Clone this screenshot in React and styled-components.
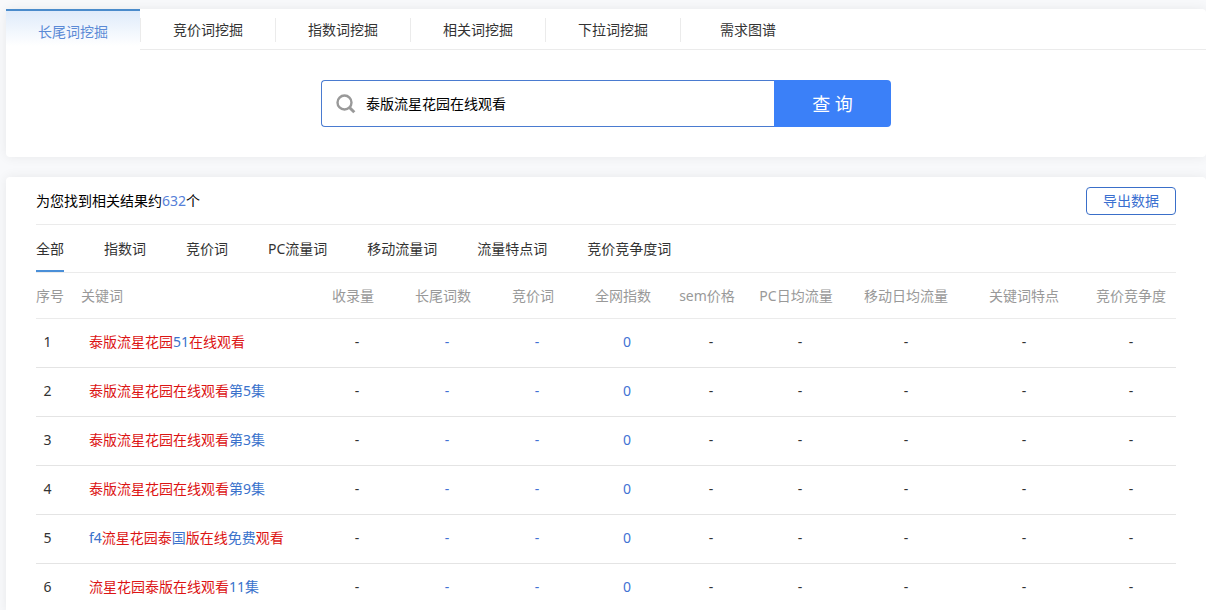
import React, { useState } from "react";
import styled, { createGlobalStyle } from "styled-components";

const GlobalStyle = createGlobalStyle`
  *, *::before, *::after { box-sizing: border-box; }
  body {
    margin: 0;
    background: #f8f9fb;
    color: #333;
    font: 14px/20px "Noto Sans", "Noto Sans CJK SC", sans-serif;
  }
  button, input { font: inherit; }
`;

const Page = styled.main`
  display: flex;
  flex-direction: column;
  gap: 20px;
  padding: 9px 0 20px 6px;
`;

const Card = styled.section`
  background: #fff;
  border-radius: 4px;
  box-shadow: 0 0 12px rgba(0, 0, 0, 0.07);
`;

const TabBar = styled.nav`
  display: flex;
  height: 41px;

  &::after {
    content: "";
    flex: 1;
    border-bottom: 1px solid #ebebeb;
  }
`;

const Tab = styled.button`
  display: flex;
  align-items: center;
  width: 135px;
  padding: 2px 0 0;
  border: 0;
  border-bottom: 1px solid #ebebeb;
  background: #fff;
  color: #333;
  cursor: pointer;

  span {
    flex: 1;
    line-height: 24px;
    border-right: 1px solid #ebebeb;
  }

  &:last-child span { border-right-color: transparent; }

  &[aria-current="page"] {
    width: 134px;
    padding-top: 3px;
    border-top: 2px solid #4a8bcb;
    border-bottom: 0;
    background: linear-gradient(#dfebfa, #fff 90%);
    color: #5b8ad6;
  }

  &[aria-current="page"] span { border-right: 0; }

  &[aria-current="page"] + & span { border-left: 1px solid #ebebeb; }

  &[aria-current="page"] + & { width: 136px; }
`;

const SearchForm = styled.form`
  display: flex;
  width: 570px;
  max-width: 100%;
  height: 107px;
  margin: 0 auto;
  padding: 30px 0;
`;

const SearchField = styled.label`
  flex: 1;
  display: flex;
  align-items: center;
  gap: 10px;
  padding-left: 14px;
  border: 1px solid #4a7bd0;
  border-right: 0;
  border-radius: 4px 0 0 4px;
`;

const SearchInput = styled.input`
  flex: 1;
  min-width: 0;
  height: 40px;
  padding: 0 0 2px;
  border: 0;
  outline: 0;
  background: transparent;
  color: #000;
`;

const SearchButton = styled.button`
  width: 117px;
  padding: 0;
  border: 0;
  border-radius: 0 4px 4px 0;
  background: #3b80f8;
  color: #fff;
  font-size: 18px;
  cursor: pointer;
`;

const Results = styled(Card)`
  padding: 0 30px;
`;

const Summary = styled.header`
  display: flex;
  align-items: center;
  justify-content: space-between;
  height: 48px;
  border-bottom: 1px solid #ebebeb;
  color: #000;

  p { margin: 0; }
  em { font-style: normal; color: #5580d8; }
`;

const ExportButton = styled.button`
  width: 90px;
  height: 28px;
  padding: 0;
  border: 1px solid #3a6fc9;
  border-radius: 4px;
  background: #fff;
  color: #3a6fd0;
  cursor: pointer;
`;

const Filters = styled.nav`
  display: flex;
  gap: 40px;
  height: 48px;
  border-bottom: 1px solid #ebebeb;
`;

const Filter = styled.button`
  padding: 2px 0 0;
  border: 0;
  border-bottom: 2px solid transparent;
  background: none;
  color: #333;
  white-space: nowrap;
  cursor: pointer;

  &[aria-pressed="true"] { border-bottom-color: #4a8fd8; }
`;

const Table = styled.table`
  width: 100%;
  table-layout: fixed;
  border-collapse: separate;
  border-spacing: 0;
`;

const HeadCell = styled.th`
  height: 46px;
  padding: 0 ${(p) => (p.$sortable ? 8 : 0)}px 0 0;
  border-bottom: 1px solid #ebebeb;
  color: #999;
  font-weight: 400;
  text-align: ${(p) => (p.$left ? "left" : "center")};
  white-space: nowrap;
`;

const Cell = styled.td`
  height: 49px;
  padding: 0 0 2px;
  border-bottom: 1px solid #e4e4e4;
  text-align: center;
  white-space: nowrap;
  color: ${(p) => (p.$linked ? "#4272d4" : "#333")};
`;

const IndexCell = styled(Cell)`
  padding-right: 22px;
`;

const KeywordCell = styled(Cell)`
  padding-left: 8px;
  text-align: left;
`;

const Keyword = styled.a`
  color: #3a72cc;
  text-decoration: none;

  mark { background: none; color: #dc1414; }
`;

const tabs = ["长尾词挖掘", "竞价词挖掘", "指数词挖掘", "相关词挖掘", "下拉词挖掘", "需求图谱"];
const filters = ["全部", "指数词", "竞价词", "PC流量词", "移动流量词", "流量特点词", "竞价竞争度词"];

const columns = [
  { label: "收录量", width: 90, value: "-", sortable: true },
  { label: "长尾词数", width: 90, value: "-", sortable: true, linked: true },
  { label: "竞价词", width: 90, value: "-", sortable: true, linked: true },
  { label: "全网指数", width: 90, value: "0", sortable: true, linked: true },
  { label: "sem价格", width: 78, value: "-", sortable: true },
  { label: "PC日均流量", width: 100, value: "-", sortable: true },
  { label: "移动日均流量", width: 112, value: "-" },
  { label: "关键词特点", width: 124, value: "-" },
  { label: "竞价竞争度", width: 90, value: "-" },
];

// Parts in square brackets are the characters shared with the search term.
const keywords = [
  "[泰版流星花园]51[在线观看]",
  "[泰版流星花园在线观看]第5集",
  "[泰版流星花园在线观看]第3集",
  "[泰版流星花园在线观看]第9集",
  "f4[流星花园泰]国[版在线]免费[观看]",
  "[流星花园泰版在线观看]11集",
];

function Highlighted({ text }) {
  return text
    .split(/(\[[^\]]+\])/)
    .filter(Boolean)
    .map((part, i) => (part[0] === "[" ? <mark key={i}>{part.slice(1, -1)}</mark> : part));
}

function SearchIcon() {
  return (
    <svg width="20" height="20" viewBox="0 0 20 20" fill="none" stroke="#999" aria-hidden="true">
      <circle cx="8.5" cy="8.5" r="7" strokeWidth="2.4" />
      <path d="M13.5 13.5 18.3 18.3" strokeWidth="3" />
    </svg>
  );
}

export default function App() {
  const [tab, setTab] = useState(0);
  const [filter, setFilter] = useState(0);
  const [query, setQuery] = useState("泰版流星花园在线观看");

  return (
    <>
      <GlobalStyle />
      <Page>
        <Card>
          <TabBar>
            {tabs.map((name, i) => (
              <Tab key={name} type="button" aria-current={i === tab ? "page" : undefined} onClick={() => setTab(i)}>
                <span>{name}</span>
              </Tab>
            ))}
          </TabBar>
          <SearchForm onSubmit={(e) => e.preventDefault()}>
            <SearchField>
              <SearchIcon />
              <SearchInput aria-label="关键词" value={query} onChange={(e) => setQuery(e.target.value)} />
            </SearchField>
            <SearchButton type="submit">查 询</SearchButton>
          </SearchForm>
        </Card>

        <Results>
          <Summary>
            <p>为您找到相关结果约<em>632</em>个</p>
            <ExportButton type="button">导出数据</ExportButton>
          </Summary>
          <Filters>
            {filters.map((name, i) => (
              <Filter key={name} type="button" aria-pressed={i === filter} onClick={() => setFilter(i)}>
                {name}
              </Filter>
            ))}
          </Filters>
          <Table>
            <colgroup>
              <col width="45" />
              <col />
              {columns.map((c) => <col key={c.label} width={c.width} />)}
            </colgroup>
            <thead>
              <tr>
                <HeadCell $left>序号</HeadCell>
                <HeadCell $left>关键词</HeadCell>
                {columns.map((c) => (
                  <HeadCell key={c.label} $sortable={c.sortable}>{c.label}</HeadCell>
                ))}
              </tr>
            </thead>
            <tbody>
              {keywords.map((k, i) => (
                <tr key={k}>
                  <IndexCell>{i + 1}</IndexCell>
                  <KeywordCell>
                    <Keyword href="#"><Highlighted text={k} /></Keyword>
                  </KeywordCell>
                  {columns.map((c) => (
                    <Cell key={c.label} $linked={c.linked}>{c.value}</Cell>
                  ))}
                </tr>
              ))}
            </tbody>
          </Table>
        </Results>
      </Page>
    </>
  );
}
